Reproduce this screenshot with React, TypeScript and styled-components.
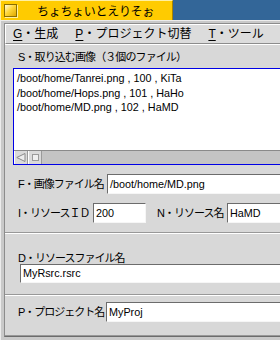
import React from "react";
import styled, { createGlobalStyle } from "styled-components";

const Global = createGlobalStyle`
  html, body { margin: 0; padding: 0; background: #336698; overflow: hidden; }
  body { width: 280px; height: 340px; }
  * { box-sizing: border-box; }
`;

const FONT = `"Liberation Sans", "Noto Sans CJK JP", sans-serif`;

const Desktop = styled.div`
  width: 280px;
  height: 340px;
  overflow: hidden;
  background: #336698;
  font-family: ${FONT};
  color: #000;
`;

const TitleTab = styled.div`
  width: 173px;
  height: 20px;
  background: #ffcb00;
  border-top: 1px solid #fff0a0;
  border-left: 1px solid #fff0a0;
  border-right: 1px solid #a88400;
  display: flex;
  align-items: center;
  padding-left: 3px;
  gap: 20px;
`;

const CloseBox = styled.div`
  width: 13px;
  height: 13px;
  border: 1px solid #8a6e00;
  background: linear-gradient(135deg, #fffbe0 0%, #ffd83a 45%, #e0a800 100%);
  box-shadow: 1px 1px 0 #fff0a0;
`;

const Title = styled.span`
  font-size: 12px;
  letter-spacing: -0.3px;
  white-space: nowrap;
`;

const Frame = styled.div`
  width: 340px;
  height: 320px;
  background: #c9c9c9;
  border-left: 1px solid #ececec;
  border-top: 1px solid #ececec;
  padding: 2px 0 3px 3px;
  display: flex;
  flex-direction: column;
`;

const Inner = styled.div`
  flex: 1;
  display: flex;
  flex-direction: column;
  border-left: 1px solid #8c8c8c;
  border-top: 1px solid #8c8c8c;
  border-bottom: 1px solid #6c6c6c;
  background: #d8d8d8;
`;

const MenuBar = styled.div`
  height: 20px;
  flex: none;
  display: flex;
  align-items: center;
  gap: 17px;
  padding-left: 7px;
  background: #dcdcdc;
  border-top: 1px solid #ffffff;
  border-left: 1px solid #ffffff;
  border-bottom: 1px solid #8c8c8c;
  font-size: 12px;
  white-space: nowrap;
`;

const MenuItem = styled.span`
  line-height: 14px;
  u { text-decoration: underline; text-underline-offset: 2px; }
`;

const Section = styled.div<{ $pad: string; $grow?: boolean }>`
  padding: ${(p) => p.$pad};
  border-top: 1px solid #ffffff;
  border-bottom: 1px solid #989898;
  display: flex;
  flex-direction: column;
  flex: ${(p) => (p.$grow ? "1" : "none")};
`;

const Label = styled.div<{ $w?: number; $ls?: number }>`
  font-size: 11px;
  line-height: 12px;
  letter-spacing: ${(p) => p.$ls ?? -1}px;
  white-space: nowrap;
  width: ${(p) => (p.$w ? `${p.$w}px` : "auto")};
  flex: none;
`;

const ListBox = styled.div`
  margin-top: 5px;
  margin-left: -5px;
  height: 97px;
  border: 1px solid #0000e6;
  background: #fff;
  display: flex;
  flex-direction: column;
`;

const ListItems = styled.div`
  flex: 1;
  padding: 2px 0 0 3px;
  font-size: 10.8px;
  line-height: 14.5px;
`;

const ListItem = styled.div`
  white-space: nowrap;
`;

const HScroll = styled.div`
  height: 14px;
  flex: none;
  display: flex;
  background: #c4c4c4;
  border-top: 1px solid #8a8a8a;
`;

const ScrollBtn = styled.div`
  width: 14px;
  height: 13px;
  background: #dadada;
  border-left: 1px solid #fff;
  border-right: 1px solid #9a9a9a;
  display: flex;
  align-items: center;
  justify-content: center;
`;

const Row = styled.div<{ $mt?: number }>`
  display: flex;
  align-items: center;
  margin-top: ${(p) => p.$mt ?? 0}px;
  white-space: nowrap;
`;

const Field = styled.div<{ $w?: number; $h?: number; $ml?: number }>`
  height: ${(p) => p.$h ?? 20}px;
  width: ${(p) => (p.$w ? `${p.$w}px` : "auto")};
  flex: ${(p) => (p.$w ? "none" : "1")};
  margin-left: ${(p) => p.$ml ?? 0}px;
  background: #fff;
  border-top: 1px solid #6c6c6c;
  border-left: 1px solid #6c6c6c;
  border-bottom: 1px solid #f6f6f6;
  border-right: 1px solid #f6f6f6;
  font-size: 10.8px;
  line-height: ${(p) => (p.$h ?? 20) - 2}px;
  padding-left: 2px;
  white-space: nowrap;
  overflow: hidden;
`;

const Spacer = styled.div<{ $w: number }>`
  width: ${(p) => p.$w}px;
  flex: none;
`;

export default function App() {
  return (
    <Desktop>
      <Global />
      <TitleTab>
        <CloseBox />
        <Title>ちょちょいとえりそぉ</Title>
      </TitleTab>
      <Frame>
        <Inner>
          <MenuBar>
            <MenuItem><u>G</u>・生成</MenuItem>
            <MenuItem><u>P</u>・プロジェクト切替</MenuItem>
            <MenuItem><u>T</u>・ツール</MenuItem>
            <MenuItem><u>H</u>・ヘルプ</MenuItem>
          </MenuBar>
          <Section $pad="6px 0 9px 13px">
            <Label $ls={-0.9}>S・取り込む画像（３個のファイル）</Label>
            <ListBox>
              <ListItems>
                <ListItem>/boot/home/Tanrei.png , 100 , KiTa</ListItem>
                <ListItem>/boot/home/Hops.png , 101 , HaHo</ListItem>
                <ListItem>/boot/home/MD.png , 102 , HaMD</ListItem>
              </ListItems>
              <HScroll>
                <ScrollBtn>
                  <svg width="10" height="9" viewBox="0 0 10 9">
                    <path d="M9 0.5 L0.8 4.5 L9 8.5 Z" fill="#ededed" stroke="#8a8a8a" strokeWidth="1" />
                  </svg>
                </ScrollBtn>
                <ScrollBtn>
                  <svg width="7" height="7" viewBox="0 0 7 7">
                    <rect x="0.5" y="0.5" width="6" height="6" fill="#efefef" stroke="#9a9a9a" />
                  </svg>
                </ScrollBtn>
              </HScroll>
            </ListBox>
            <Row $mt={9}>
              <Label $w={89}>F・画像ファイル名</Label>
              <Field>/boot/home/MD.png</Field>
            </Row>
            <Row $mt={9}>
              <Label $w={75}>I・リソースＩＤ</Label>
              <Field $w={53}>200</Field>
              <Spacer $w={11} />
              <Label $w={70}>N・リソース名</Label>
              <Field>HaMD</Field>
            </Row>
          </Section>
          <Section $pad="18px 0 11px 13px">
            <Label>D・リソースファイル名</Label>
            <Row>
              <Field $h={19} $ml={2}>MyRsrc.rsrc</Field>
            </Row>
          </Section>
          <Section $pad="6px 0 12px 13px" $grow>
            <Row>
              <Label $w={88}>P・プロジェクト名</Label>
              <Field>MyProj</Field>
            </Row>
          </Section>
        </Inner>
      </Frame>
    </Desktop>
  );
}
